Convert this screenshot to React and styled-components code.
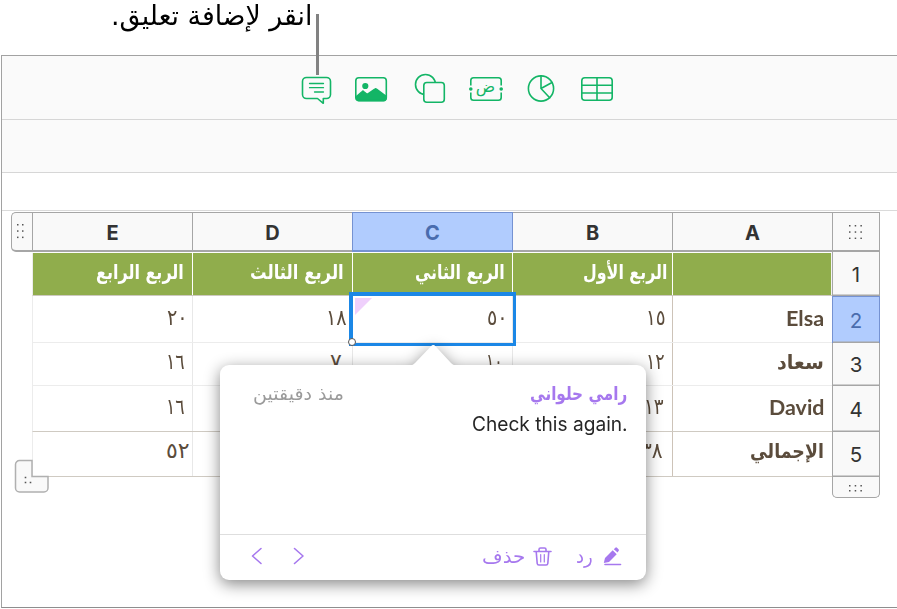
import { useLayoutEffect, useRef } from 'react'
import styled, { createGlobalStyle } from 'styled-components'

const colors = {
  green: '#13b566',
  headerGreen: '#90ad4c',
  purple: '#a678ee',
  brown: '#5b4c3c',
  select: '#1b87e6',
  selectFill: '#b1ccfe',
  tab: '#f9f9f9',
  tabLine: '#a6a6a6',
}

const GlobalStyle = createGlobalStyle`
  * {
    box-sizing: border-box;
  }
  body {
    margin: 0;
    background: white;
    font-family: Inter, 'DejaVu Sans', sans-serif;
  }
`

const Page = styled.div`
  position: relative;
  width: 897px;
  height: 609px;
  overflow: hidden;
`

const Callout = styled.div`
  height: 55px;
  padding-left: 111px;
  font-family: 'DejaVu Sans', sans-serif;
  font-size: 27px;
  line-height: 31px;
  color: black;
`

const CalloutLine = styled.div`
  position: absolute;
  left: 316px;
  top: 14px;
  width: 2.5px;
  height: 61px;
  background: #828282;
`

const Window = styled.div`
  height: 553px;
  border: 1px solid #a2a2a2;
  border-right: none;
  border-bottom-color: #8e8e8e;
  margin-left: 1px;
`

const Toolbar = styled.div`
  height: 64px;
  padding: 17px 0 0 286px;
  display: grid;
  grid-template-columns: repeat(6, 56px);
  background: #fafafa;
  border-bottom: 1px solid #d6d6d6;
`

const ToolIcon = styled.svg`
  width: 56px;
  height: 32px;
  fill: none;
  stroke: ${colors.green};
  stroke-width: 1.6;
  stroke-linecap: round;
  stroke-linejoin: round;
`

const FormatBar = styled.div`
  height: 53px;
  background: #fafafa;
  border-bottom: 1px solid #d6d6d6;
`

const TabsBar = styled.div`
  height: 38px;
  border-bottom: 1px solid #dadada;
`

const Sheet = styled.div`
  display: flex;
  padding: 1px 0 0 9px;
`

const SideHandle = styled.div`
  width: 21px;
  height: 40px;
  padding-right: 4px;
  background: ${colors.tab};
  border: 1.5px solid ${colors.tabLine};
  border-bottom-width: 2px;
  border-right: none;
  border-radius: 5px 0 0 5px;
  display: flex;
  align-items: center;
  justify-content: center;
`

const Dots = styled.svg`
  display: block;
  fill: #555;
`

const Grid = styled.div`
  width: 801px;
`

const ColumnHeads = styled.div`
  display: flex;
  height: 40px;
  border-left: 1px solid ${colors.tabLine};
`

const ColumnHead = styled.div`
  width: 160px;
  background: ${(p) => (p.$active ? colors.selectFill : colors.tab)};
  border: solid ${(p) => (p.$active ? '#7592d2' : colors.tabLine)};
  border-width: 1px 1px 2px 0;
  color: ${(p) => (p.$active ? '#4a6cae' : '#333')};
  box-shadow: ${(p) => (p.$active ? '-1px 0 0 #7592d2' : 'none')};
  font-size: 20px;
  font-weight: 700;
  line-height: 40px;
  text-align: center;
`

const Row = styled.div`
  display: flex;
  height: ${(p) => p.$height}px;
  margin-top: ${(p) => (p.$header ? 1 : 0)}px;
  border-left: 1px solid #ececec;
  border-bottom: 1px solid ${(p) => p.$line};
`

const Cell = styled.div`
  width: 160px;
  display: flex;
  justify-content: flex-end;
  padding-right: ${(p) => p.$pad}px;
  padding-top: ${(p) => p.$top || 0}px;
  border-right: ${(p) => (p.$line ? `1px solid ${p.$line}` : 'none')};
  background: ${(p) => (p.$header ? colors.headerGreen : 'white')};
  background-clip: padding-box;
  color: ${(p) => (p.$header ? 'white' : colors.brown)};
  font-family: ${(p) => (p.$latin ? 'Lato' : "'DejaVu Sans'")}, 'DejaVu Sans',
    sans-serif;
  font-size: ${(p) => p.$size}px;
  font-weight: ${(p) => (p.$bold ? 700 : 400)};
  line-height: 38px;
  white-space: nowrap;

  &:last-child {
    border-right-width: 2px;
  }
`

const RowHeads = styled.div`
  width: 48px;
  margin-left: -1px;
  border: solid ${colors.tabLine};
  border-width: 0 1.5px;
  border-radius: 0 0 6px 6px;
`

const RowHead = styled.div`
  height: ${(p) => p.$height}px;
  margin: 0 ${(p) => (p.$active ? -1 : 0)}px;
  border: solid ${(p) => (p.$active ? '#7592d2' : 'transparent')};
  border-width: ${(p) => (p.$active ? '1px 1px 0' : '0')};
  box-shadow: inset 0 -1.5px 0 ${colors.tabLine};
  background: ${(p) => (p.$active ? colors.selectFill : colors.tab)};
  color: ${(p) => (p.$active ? '#4a6cae' : '#333')};
  display: flex;
  align-items: center;
  justify-content: center;
  font-size: 20.5px;
`

const CornerHead = styled(RowHead)`
  box-shadow: inset 0 1px 0 ${colors.tabLine}, inset 0 -2px 0 ${colors.tabLine};
  padding: 0;
`

const BottomHead = styled(RowHead)`
  margin: 0 -1px;
  padding-top: 2px;
  border: solid ${colors.tabLine};
  border-width: 0 1.5px 1.5px;
  border-radius: 0 0 5px 5px;
  box-shadow: none;
`

const CornerTab = styled.svg`
  position: absolute;
  left: 14px;
  top: 459px;
`

const Selection = styled.div`
  position: absolute;
  left: 349px;
  top: 292px;
  width: 167px;
  height: 54px;
  border: solid ${colors.select};
  border-width: 4px 3px 3px 4px;
`

const CommentFlag = styled.div`
  margin: 2px;
  width: 17px;
  height: 17px;
  background: #efd0fc;
  clip-path: polygon(0 0, 100% 0, 0 100%);
`

const SelectionKnob = styled.div`
  position: absolute;
  left: -1px;
  bottom: 0;
  width: 8px;
  height: 8px;
  margin: 0 0 -3px -4px;
  border: 1.5px solid #555;
  border-radius: 50%;
  background: white;
`

const Popover = styled.div`
  position: absolute;
  left: 220px;
  top: 365px;
  width: 426px;
  height: 215px;
  border-radius: 9px;
  background: white;
  filter: drop-shadow(0 4px 8px rgba(0, 0, 0, 0.48));
  display: flex;
  flex-direction: column;
`

const Arrow = styled.svg`
  position: absolute;
  left: 187px;
  top: -21px;
  fill: white;
`

const CommentHead = styled.div`
  display: flex;
  justify-content: space-between;
  padding: 14px 19px 0 33px;
  height: 44px;
  line-height: 29px;
  font-family: 'DejaVu Sans', sans-serif;
`

const Time = styled.div`
  font-size: 18px;
  color: #9b9b9b;
`

const Author = styled.div`
  font-size: 19px;
  font-weight: 700;
  color: ${colors.purple};
`

const CommentBody = styled.div`
  flex: 1;
  display: flex;
  justify-content: flex-end;
  padding-right: 18px;
  line-height: 31px;
  font-size: 19.5px;
  color: #262626;
`

const CommentFooter = styled.div`
  height: 46px;
  border-top: 1px solid #dedede;
  display: flex;
  align-items: center;
  padding: 0 24px 3px 29px;
  color: ${colors.purple};
`

const FooterButton = styled.button`
  border: none;
  background: none;
  padding: 0;
  height: 30px;
  margin-left: ${(p) => p.$gap || 0}px;
  display: flex;
  align-items: center;
  gap: ${(p) => p.$inner || 0}px;
  color: inherit;
  font-family: 'DejaVu Sans', sans-serif;
  font-size: 19px;
  line-height: 30px;
`

const FooterIcon = styled.svg`
  display: block;
  fill: none;
  stroke: currentColor;
  stroke-width: 1.6;
  stroke-linecap: round;
  stroke-linejoin: round;
`

const Spacer = styled.div`
  flex: 1;
`

const FitBox = styled.span`
  display: block;
  direction: ltr;
  width: ${(p) => p.$width}px;
`

const FitInner = styled.span`
  display: inline-block;
  white-space: nowrap;
  transform-origin: 0 50%;
`

const Fit = ({ width, children, dir = 'rtl' }) => {
  const ref = useRef(null)

  useLayoutEffect(() => {
    const el = ref.current
    el.style.transform = `scaleX(${width / el.offsetWidth})`
  }, [width, children])

  return (
    <FitBox $width={width}>
      <FitInner ref={ref} dir={dir}>
        {children}
      </FitInner>
    </FitBox>
  )
}

const DotGrid = ({ cols, rows, dx, dy }) => (
  <Dots width={(cols - 1) * dx + 2} height={(rows - 1) * dy + 2}>
    {Array.from({ length: cols * rows }, (_, i) => (
      <rect
        key={i}
        x={(i % cols) * dx}
        y={Math.floor(i / cols) * dy}
        width="1.5"
        height="1.5"
      />
    ))}
  </Dots>
)

// cells run E to A; each is [text, width, right padding]
const rows = [
  {
    height: 43,
    line: '#cdc9bf',
    header: true,
    top: -1,
    cells: [
      ['الربع الرابع', 88, 8],
      ['الربع الثالث', 94, 8],
      ['الربع الثاني', 90, 7],
      ['الربع الأول', 84, 5],
      ['', 0, 0],
    ],
  },
  {
    height: 47,
    line: '#ececec',
    top: 3,
    cells: [
      ['٢٠', 21, 4],
      ['١٨', 21, 5],
      ['٥٠', 21, 4],
      ['١٥', 20, 6],
      ['Elsa', 38, 7],
    ],
  },
  {
    height: 43,
    line: '#ececec',
    top: 0,
    cells: [
      ['١٦', 19, 7],
      ['٧', 12, 10],
      ['١٠', 17, 9],
      ['١٢', 19, 7],
      ['سعاد', 47, 7],
    ],
  },
  {
    height: 46,
    line: '#cfcac2',
    top: 2,
    cells: [
      ['١٦', 19, 7],
      ['', 0, 0],
      ['', 0, 0],
      ['١٣', 20, 8],
      ['David', 55, 7],
    ],
  },
  {
    height: 45,
    line: '#cfcac2',
    top: 0,
    cells: [
      ['٥٢', 24, 2],
      ['', 0, 0],
      ['', 0, 0],
      ['٣٨', 22, 9],
      ['الإجمالي', 74, 7],
    ],
  },
]

const cellLine = (row, i) => {
  if (i === 4) return row.header ? '#f4f4f4' : 'white'
  if (row.header) return 'white'
  return i === 3 ? '#cdc3b8' : '#e8e8e8'
}

const cellSize = (row, i, latin) => {
  if (latin) return 21
  return row.header || i === 4 ? 20 : 22
}

const TableRow = ({ row }) => (
  <Row $height={row.height} $line={row.line} $header={row.header}>
    {row.cells.map(([text, width, pad], i) => {
      const latin = /[A-Za-z]/.test(text)
      return (
        <Cell
          key={i}
          $header={row.header}
          $latin={latin}
          $bold={row.header || i === 4}
          $size={cellSize(row, i, latin)}
          $pad={pad}
          $top={row.top}
          $line={cellLine(row, i)}
        >
          {text && (
            <Fit width={width} dir={latin ? 'ltr' : 'rtl'}>
              {text}
            </Fit>
          )}
        </Cell>
      )
    })}
  </Row>
)

const Tools = () => (
  <Toolbar>
    <ToolIcon>
      <path d="M18.500 4.500h20a4 4 0 0 1 4 4v13a4 4 0 0 1-4 4h-3.200v4.800l-5.800-4.800H18.500a4 4 0 0 1-4-4v-13a4 4 0 0 1 4-4z" />
      <path strokeWidth="1.3" d="M21.500 10.500h14M21.500 14.700h14M26.500 19h9" />
    </ToolIcon>
    <ToolIcon>
      <rect x="11.800" y="4.800" width="30.500" height="22.700" rx="3" />
      <circle cx="21.300" cy="13" r="2.300" fill={colors.green} />
      <path
        fill={colors.green}
        d="M12.500 23.500l5.800-5c.4-.4.9-.4 1.300 0l3.700 3 7.600-5.400c.5-.4 1-.4 1.500 0l9.400 7v2.500a2 2 0 0 1-2 2h-25a2 2 0 0 1-2-2z"
      />
    </ToolIcon>
    <ToolIcon>
      <circle cx="25.500" cy="11.500" r="10" />
      <rect
        x="23.800"
        y="9.500"
        width="20.500"
        height="19.800"
        rx="3"
        fill="#fafafa"
      />
    </ToolIcon>
    <ToolIcon>
      <path
        strokeLinecap="butt"
        d="M14.800 12.500V7.500a2.700 2.700 0 0 1 2.700-2.700h25a2.700 2.700 0 0 1 2.700 2.700v5M14.800 19.500v5a2.700 2.700 0 0 0 2.700 2.700h25a2.700 2.700 0 0 0 2.700-2.700v-5"
      />
      <circle cx="14.800" cy="16" r="1" fill={colors.green} />
      <circle cx="45.200" cy="16" r="1" fill={colors.green} />
      <text
        x="29.500"
        y="18.500"
        textAnchor="middle"
        fontFamily="DejaVu Sans, sans-serif"
        fontSize="16"
        fill={colors.green}
        stroke="none"
      >
        ض
      </text>
    </ToolIcon>
    <ToolIcon>
      <circle cx="29" cy="15.500" r="12.600" />
      <path d="M29 2.900v12.600l11-6M29 15.500l8.700 9.300" />
    </ToolIcon>
    <ToolIcon>
      <rect x="13.800" y="4.800" width="30.400" height="22.400" rx="3" />
      <path d="M29 4.800v22.400M13.800 12.200h30.400M13.800 20h30.400" />
    </ToolIcon>
  </Toolbar>
)

const CommentPopover = () => (
  <Popover>
    <Arrow width="52" height="22">
      <path d="M0 22c4 0 6-1 8-3L24 2.200c1.500-1.600 3-1.600 4.500 0L44 19c2 2 4 3 8 3z" />
    </Arrow>
    <CommentHead>
      <Time>
        <Fit width={91}>منذ دقيقتين</Fit>
      </Time>
      <Author>
        <Fit width={97}>رامي حلواني</Fit>
      </Author>
    </CommentHead>
    <CommentBody>
      <Fit width={156} dir="ltr">
        Check this again.
      </Fit>
    </CommentBody>
    <CommentFooter>
      <FooterButton $gap={2}>
        <FooterIcon width="12" height="18">
          <path d="M10 1.500L1.500 9l8.500 7.500" />
        </FooterIcon>
      </FooterButton>
      <FooterButton $gap={30}>
        <FooterIcon width="12" height="18">
          <path d="M1.500 1.500L10 9l-8.500 7.500" />
        </FooterIcon>
      </FooterButton>
      <Spacer />
      <FooterButton $inner={9}>
        <Fit width={43}>حذف</Fit>
        <FooterIcon width="19" height="19" viewBox="0 0 19 19">
          <path d="M1 4.500h17M6 4V2.500A1.500 1.500 0 0 1 7.500 1h4A1.500 1.500 0 0 1 13 2.500V4M3.200 4.500l1 12a1.700 1.700 0 0 0 1.700 1.500h7.200a1.700 1.700 0 0 0 1.700-1.500l1-12" />
          <path strokeWidth="1.200" d="M7.700 7.500v7.500M11.300 7.500v7.500" />
        </FooterIcon>
      </FooterButton>
      <FooterButton $gap={24} $inner={10}>
        <Fit width={17}>رد</Fit>
        <FooterIcon width="19" height="19" viewBox="0 0 19 19">
          <g fill="currentColor" stroke="none">
            <path d="M.8 16l1.200-5L9.700 3.200l4 4L6 15z" />
            <path d="M10.800 2.200L12.300.8a1.200 1.200 0 0 1 1.700 0l1.500 1.500a1.200 1.200 0 0 1 0 1.700L14.600 5.500z" />
          </g>
          <path d="M2 17.500h15.500" />
        </FooterIcon>
      </FooterButton>
    </CommentFooter>
  </Popover>
)

const App = () => (
  <Page>
    <GlobalStyle />
    <Callout>
      <Fit width={201}>انقر لإضافة تعليق.</Fit>
    </Callout>
    <Window>
      <Tools />
      <FormatBar />
      <TabsBar />
      <Sheet>
        <SideHandle>
          <DotGrid cols={2} rows={3} dx={5} dy={6.3} />
        </SideHandle>
        <Grid>
          <ColumnHeads>
            {['E', 'D', 'C', 'B', 'A'].map((name) => (
              <ColumnHead key={name} $active={name === 'C'}>
                {name}
              </ColumnHead>
            ))}
          </ColumnHeads>
          {rows.map((row, i) => (
            <TableRow key={i} row={row} />
          ))}
        </Grid>
        <RowHeads>
          <CornerHead $height={40}>
            <DotGrid cols={3} rows={3} dx={5.7} dy={6.3} />
          </CornerHead>
          {[44, 47, 43, 46, 45].map((height, i) => (
            <RowHead key={i} $height={height} $active={i === 1}>
              {i + 1}
            </RowHead>
          ))}
          <BottomHead $height={21}>
            <DotGrid cols={3} rows={2} dx={5.7} dy={5} />
          </BottomHead>
        </RowHeads>
      </Sheet>
    </Window>
    <CalloutLine />
    <CornerTab width="36" height="36">
      <path
        d="M5.500 1.500h12.500v16h16v11.500a4 4 0 0 1-4 4H5.500a4 4 0 0 1-4-4V5.500a4 4 0 0 1 4-4z"
        fill={colors.tab}
        stroke="#b0b0b0"
        strokeWidth="1.500"
      />
      <path
        d="M10.700 18.500h1.600M10.700 23.500h1.600M15.700 23.500h1.600"
        stroke="#555"
        strokeWidth="1.500"
      />
    </CornerTab>
    <Selection>
      <CommentFlag />
      <SelectionKnob />
    </Selection>
    <CommentPopover />
  </Page>
)

export default App
